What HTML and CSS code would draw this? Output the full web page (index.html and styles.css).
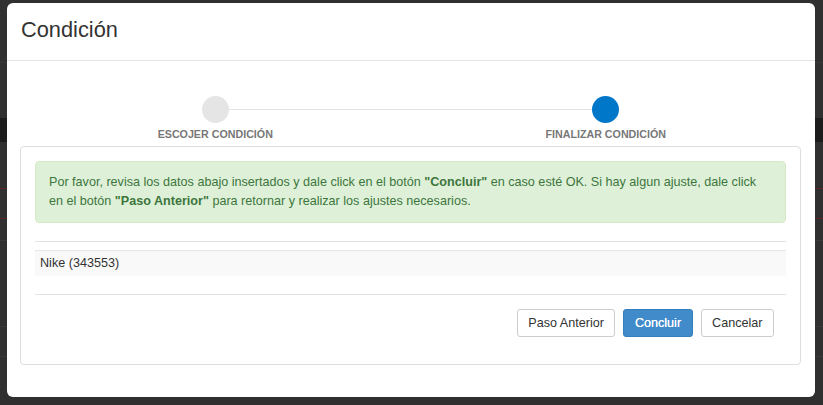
FILE: index.html
```html
<!DOCTYPE html>
<html lang="es">
<head>
<meta charset="utf-8">
<title>Condición</title>
<link rel="stylesheet" href="styles.css">
</head>
<body>
<div class="backdrop">
  <div class="modal">
    <div class="modal-header">
      <h4 class="modal-title">Condición</h4>
    </div>
    <div class="modal-body">
      <div class="stepper">
        <div class="step">
          <span class="dot"></span>
          <span class="step-label">ESCOJER CONDICIÓN</span>
        </div>
        <div class="step active">
          <span class="dot"></span>
          <span class="step-label">FINALIZAR CONDICIÓN</span>
        </div>
      </div>
      <div class="panel">
        <div class="alert">Por favor, revisa los datos abajo insertados y dale click en el botón <b>"Concluir"</b> en caso esté OK. Si hay algun ajuste, dale click en el botón <b>"Paso Anterior"</b> para retornar y realizar los ajustes necesarios.</div>
        <div class="divider"></div>
        <div class="table">
          <div class="row">Nike (343553)</div>
        </div>
        <div class="divider second"></div>
        <div class="actions">
          <button class="btn">Paso Anterior</button>
          <button class="btn primary">Concluir</button>
          <button class="btn">Cancelar</button>
        </div>
      </div>
    </div>
  </div>
</div>
</body>
</html>
```

FILE: styles.css
```css
* { box-sizing: border-box; }
html, body { margin: 0; padding: 0; }
body {
  width: 823px;
  height: 405px;
  overflow: hidden;
  font-family: "Liberation Sans", Arial, sans-serif;
  font-size: 12.6px;
  line-height: 18.5px;
  color: #333;
  background-color: #303030;
}
.backdrop {
  width: 823px;
  height: 405px;
  padding: 3px 8px 8px 7px;
  background:
    linear-gradient(#383838, #383838) 0 62px / 100% 1px no-repeat,
    linear-gradient(#1c1c1c, #1c1c1c) 0 118px / 100% 24px no-repeat,
    linear-gradient(#5a2626, #5a2626) 0 188px / 100% 1px no-repeat,
    linear-gradient(#5a2626, #5a2626) 0 218px / 100% 1px no-repeat,
    linear-gradient(#3a3a3a, #3a3a3a) 0 240px / 100% 1px no-repeat,
    linear-gradient(#3a3a3a, #3a3a3a) 0 326px / 100% 1px no-repeat,
    linear-gradient(#3a3a3a, #3a3a3a) 0 356px / 100% 1px no-repeat,
    #303030;
}
.modal {
  width: 808px;
  height: 394px;
  background: #fff;
  border-radius: 6px;
  display: flex;
  flex-direction: column;
  overflow: hidden;
}
.modal-header {
  height: 58px;
  border-bottom: 1px solid #e5e5e5;
  display: flex;
  align-items: center;
  padding: 0 14px 3px;
}
.modal-title {
  margin: 0;
  font-size: 21.8px;
  font-weight: normal;
  color: #333;
  line-height: 1.2;
}
.modal-body {
  padding: 0 14px 32px 13px;
}
.stepper {
  display: flex;
  padding-top: 35px;
  height: 85px;
}
.step {
  flex: 1;
  display: flex;
  flex-direction: column;
  align-items: center;
  position: relative;
}
.step:first-child::after {
  content: "";
  position: absolute;
  top: 13px;
  left: 50%;
  width: 100%;
  height: 1px;
  background: #e3e3e3;
}
.dot {
  width: 27px;
  height: 27px;
  border-radius: 50%;
  background: #e5e5e5;
  position: relative;
  z-index: 1;
}
.step.active .dot { background: #0077c8; }
.step-label {
  margin-top: 4px;
  font-size: 10.7px;
  font-weight: bold;
  color: #777;
  line-height: 14px;
}
.panel {
  border: 1px solid #ddd;
  border-radius: 4px;
  padding: 14px 14px 27px 14px;
}
.alert {
  background: #dff0d8;
  border: 1px solid #d6e9c6;
  border-radius: 4px;
  color: #3c763d;
  padding: 11px 13px 11px 13px;
  height: 62px;
}
.alert b { font-weight: bold; }
.divider {
  margin-top: 18px;
  border-top: 1px solid #e2e2e2;
}
.table { margin-top: 8px; }
.row {
  border-top: 1px solid #e6e6e6;
  background: #f9f9f9;
  padding: 3px 5px;
  height: 26px;
}
.actions {
  margin-top: 14px;
  display: flex;
  justify-content: flex-end;
  gap: 8px;
  padding-right: 12px;
}
.btn {
  font-family: "Liberation Sans", Arial, sans-serif;
  font-size: 12.6px;
  line-height: 18px;
  height: 28px;
  padding: 4px 10.5px;
  border: 1px solid #ccc;
  border-radius: 3px;
  background: #fff;
  color: #333;
  margin: 0;
}
.btn.primary {
  background: #428bca;
  border-color: #357ebd;
  color: #fff;
  text-shadow: 0 0 0.4px #fff;
}
```
